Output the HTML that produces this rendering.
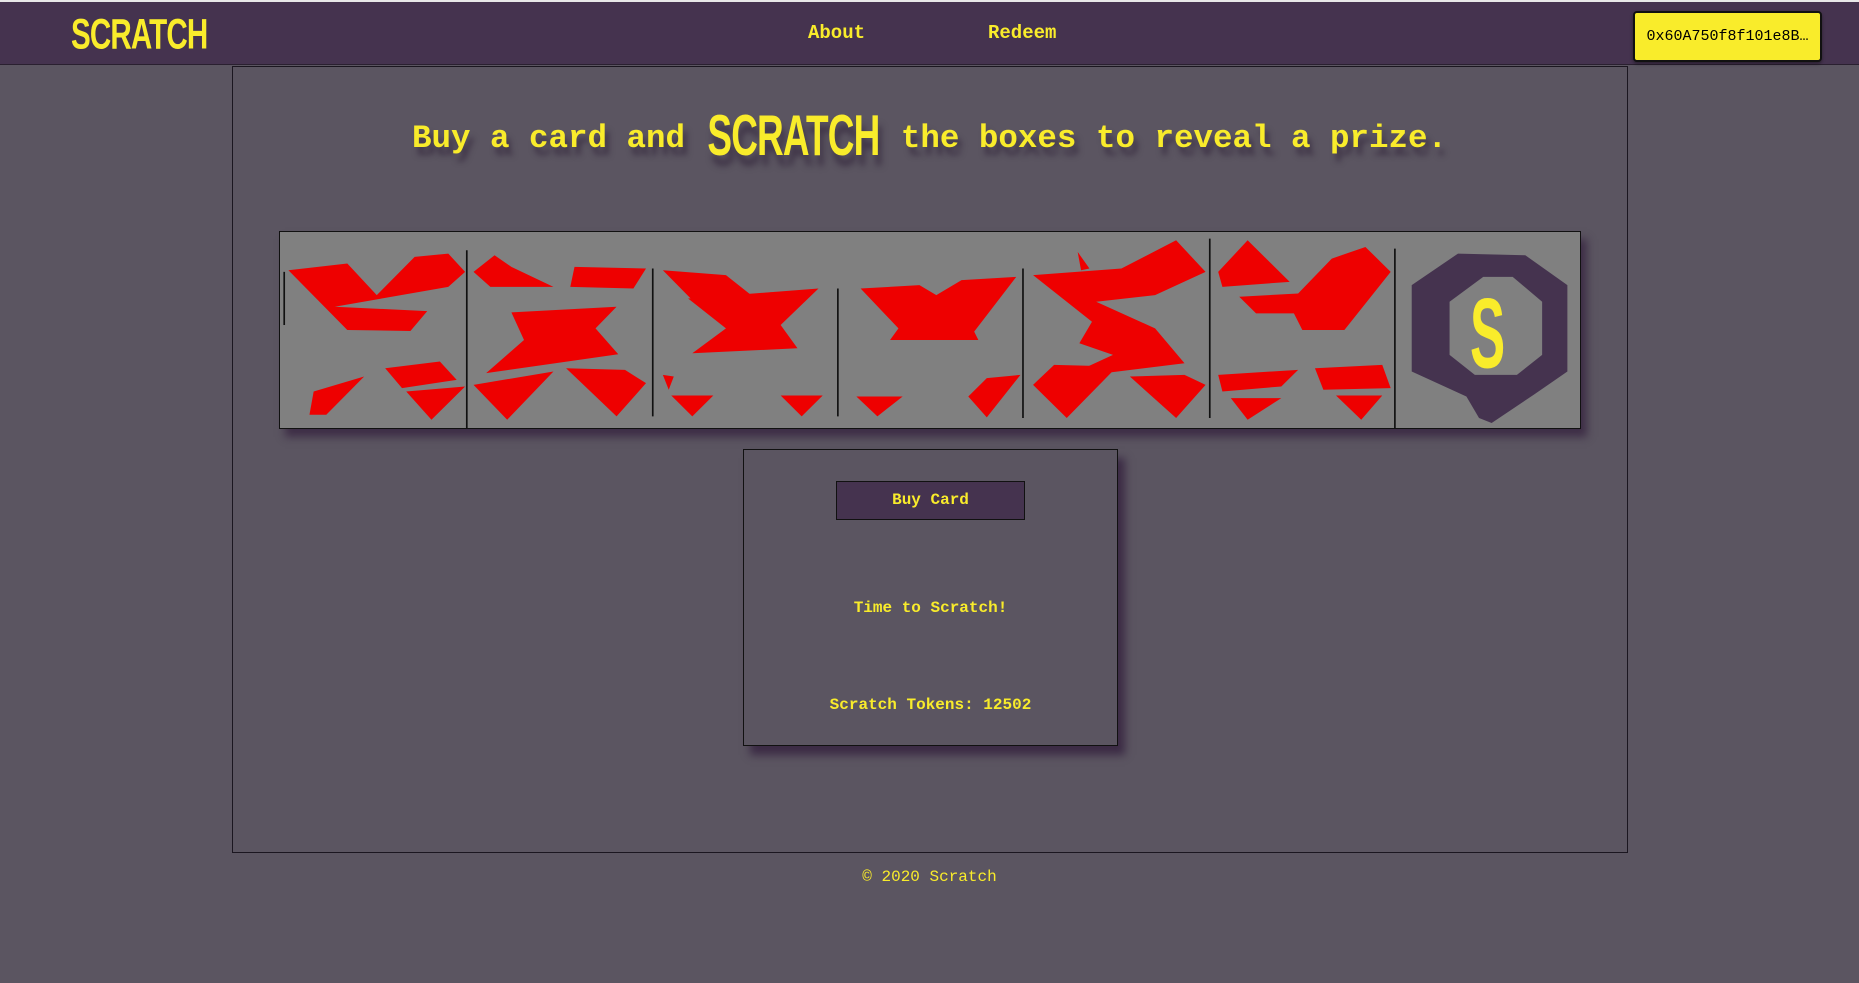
<!DOCTYPE html>
<html><head><meta charset="utf-8"><style>
*{margin:0;padding:0;box-sizing:border-box}
html,body{width:1859px;height:983px;overflow:hidden;background:#5b5561;font-family:"Liberation Mono",monospace;color:#f9ec2b}
.topline{position:absolute;left:0;top:0;width:1859px;height:2px;background:#e8e8e8}
nav{position:absolute;left:0;top:2px;width:1859px;height:63px;background:#45334f;border-bottom:1px solid #2a2030}
.logo{position:absolute;left:71px;top:9px;font-family:"Liberation Sans Narrow","Liberation Sans",sans-serif;font-weight:bold;font-size:34px;letter-spacing:-1px;transform:scale(0.87,1.25);transform-origin:top left;color:#f9ec2b}
.nl{position:absolute;top:20px;font-weight:bold;font-size:19px}
.wallet{position:absolute;left:1633px;top:9px;width:189px;height:51px;background:#f9ec2b;border:2px solid #111;border-radius:4px;color:#000;font-size:15px;line-height:47px;text-align:center;box-shadow:0 2px 3px rgba(0,0,0,.4)}
.panel{position:absolute;left:232px;top:66px;width:1396px;height:787px;border:1px solid #1b1620;background:#5b5561}
h1{position:absolute;left:0;top:112px;width:1859px;text-align:center;font-size:32.5px;font-weight:bold;text-shadow:4px 8px 6px rgba(40,25,50,.55);white-space:nowrap}
h1 .s{display:inline-block;font-family:"Liberation Sans Narrow","Liberation Sans",sans-serif;font-size:44px;letter-spacing:-1px;transform:scale(0.84,1.3);margin:0 -14px;vertical-align:-4px}
.card{position:absolute;left:279px;top:231px;width:1302px;height:198px;background:#808080;border:1px solid #111;box-shadow:6px 8px 8px rgba(50,30,60,.7)}
.S{position:absolute;left:1190px;top:46px;font-family:"Liberation Sans Narrow","Liberation Sans",sans-serif;font-weight:bold;font-size:62px;color:#f9ec2b;transform:scale(0.85,1.6);transform-origin:top left}
.box{position:absolute;left:743px;top:449px;width:375px;height:297px;border:1px solid #111;box-shadow:7px 9px 8px rgba(50,30,60,.75)}
.btn{position:absolute;left:92px;top:31px;width:189px;height:39px;background:#45334f;border:1px solid #111;text-align:center;line-height:37px;font-weight:bold;font-size:16px}
.t{position:absolute;left:0;width:373px;text-align:center;font-weight:bold;font-size:16px}
.foot{position:absolute;left:0;top:868px;width:1859px;text-align:center;font-size:16px}
</style></head><body>
<div class="topline"></div>
<nav>
<div class="logo">SCRATCH</div>
<div class="nl" style="left:808px">About</div>
<div class="nl" style="left:988px">Redeem</div>
<div class="wallet">0x60A750f8f101e8B…</div>
</nav>
<div class="panel"></div>
<h1>Buy a card and <span class="s">SCRATCH</span> the boxes to reveal a prize.</h1>
<div class="card">
<svg width="1300" height="196" viewBox="10 20 1545 590" preserveAspectRatio="none" style="position:absolute;left:0;top:0">
<g fill="#ee0000">
<polygon points="20,135 90,115 125,210 170,95 210,85 230,140 210,185 75,245 185,258 165,318 90,315"/>
<polygon points="45,570 50,500 110,455 65,570"/>
<polygon points="135,430 200,410 220,465 155,490"/>
<polygon points="160,500 230,485 190,585"/>
<polygon points="240,140 265,90 285,125 335,185 260,185"/>
<polygon points="360,125 445,130 430,190 355,185"/>
<polygon points="285,262 410,245 385,310 412,388 255,445 300,345"/>
<polygon points="240,480 335,440 280,585"/>
<polygon points="350,430 420,435 445,475 410,575"/>
<polygon points="465,135 540,150 570,210 600,200 500,225"/>
<polygon points="495,220 600,200 650,190 605,300 625,370 500,385 540,310"/>
<polygon points="465,450 478,455 472,495"/>
<polygon points="475,512 525,512 500,575"/>
<polygon points="605,512 655,512 630,575"/>
<polygon points="700,190 770,180 790,210 820,165 885,155 835,320 840,345 735,345 745,310"/>
<polygon points="695,515 750,515 720,575"/>
<polygon points="828,515 850,460 890,450 850,578"/>
<polygon points="905,150 1010,130 1075,45 1110,140 1050,210 980,230 1050,310 1085,415 990,445 940,460 1000,390 960,355 975,290 945,230"/>
<polygon points="958,80 972,130 962,135"/>
<polygon points="905,480 930,420 1005,425 945,580"/>
<polygon points="1020,455 1085,450 1110,480 1075,580"/>
<polygon points="1125,140 1160,45 1210,170 1130,185"/>
<polygon points="1150,215 1220,205 1260,100 1300,65 1330,140 1275,315 1225,315 1215,265 1170,265"/>
<polygon points="1125,450 1220,435 1200,485 1130,500"/>
<polygon points="1240,430 1320,420 1330,490 1250,495"/>
<polygon points="1140,520 1200,520 1160,585"/>
<polygon points="1265,512 1320,512 1295,585"/>
</g>
<path fill="#45334f" fill-rule="evenodd" d="M1355,180 L1410,85 L1490,90 L1540,180 L1540,440 L1500,510 L1450,595 L1435,580 L1420,515 L1355,440 Z M1400,230 L1440,155 L1475,155 L1510,230 L1510,390 L1480,450 L1430,450 L1400,390 Z"/>
<g stroke="#111" stroke-width="2">
<line x1="232" y1="75" x2="232" y2="610"/><line x1="453" y1="130" x2="453" y2="575"/>
<line x1="673" y1="190" x2="673" y2="575"/><line x1="893" y1="130" x2="893" y2="580"/>
<line x1="1115" y1="40" x2="1115" y2="580"/><line x1="1335" y1="70" x2="1335" y2="610"/>
<line x1="15" y1="140" x2="15" y2="300"/>
</g>
</svg>
<div class="S">S</div>
</div>
<div class="box">
<div class="btn">Buy Card</div>
<div class="t" style="top:149px">Time to Scratch!</div>
<div class="t" style="top:246px">Scratch Tokens: 12502</div>
</div>
<div class="foot">© 2020 Scratch</div>
</body></html>
